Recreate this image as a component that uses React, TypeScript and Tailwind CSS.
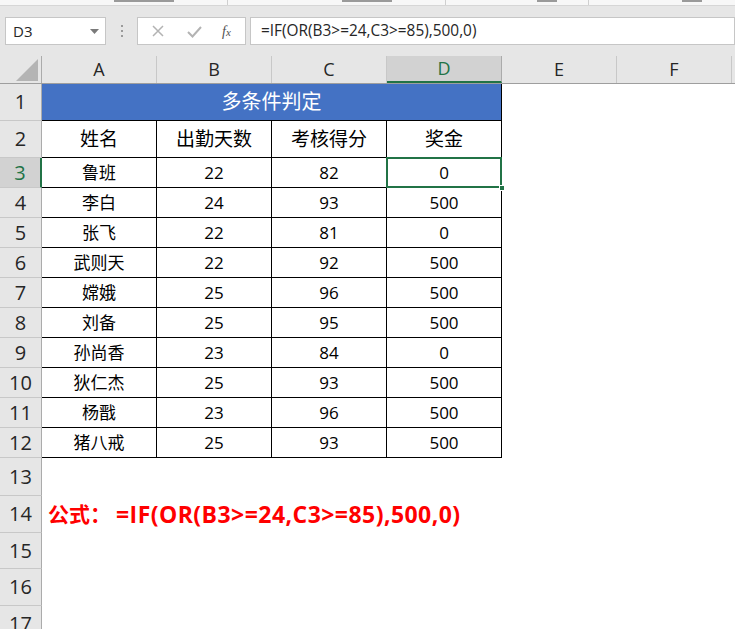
import React from 'react'

const font = "font-['Open_Sans','Noto_Sans_CJK_SC',sans-serif]"

const rows: [string, number, number, number][] = [
  ['鲁班', 22, 82, 0],
  ['李白', 24, 93, 500],
  ['张飞', 22, 81, 0],
  ['武则天', 22, 92, 500],
  ['嫦娥', 25, 96, 500],
  ['刘备', 25, 95, 500],
  ['孙尚香', 23, 84, 0],
  ['狄仁杰', 25, 93, 500],
  ['杨戬', 23, 96, 500],
  ['猪八戒', 25, 93, 500],
]

const cols = ['A', 'B', 'C', 'D', 'E', 'F']

function RowHead({ n, active = false }: { n: number; active?: boolean }) {
  return (
    <div
      className={`w-[42px] shrink-0 flex items-center justify-center text-[20px] border-b border-[#c8c8c8] ${
        active
          ? 'bg-[#d2d2d2] text-[#217346] border-r-2 border-r-[#217346]'
          : 'bg-[#e6e6e6] text-[#262626] border-r border-r-[#ababab]'
      }`}
    >
      {n}
    </div>
  )
}

function Cell({ children, edge = true, className = '' }: { children?: React.ReactNode; edge?: boolean; className?: string }) {
  return (
    <div
      className={`w-[115px] shrink-0 flex items-center justify-center text-[17px] text-black ${
        edge ? 'border-r border-b border-black' : ''
      } ${className}`}
    >
      {children}
    </div>
  )
}

export default function App() {
  return (
    <div className={`w-[735px] h-[629px] overflow-hidden bg-white ${font}`}>
      {/* ribbon remnant */}
      <div className="h-[6px] bg-[#f7f7f7] border-b border-[#d6d6d6] flex">
        <div className="w-[228px] border-r border-[#cfcfcf] flex justify-center">
          <div className="w-[60px] h-[2px] bg-[#9a9a9a] ml-[60px]" />
        </div>
        <div className="w-[218px] border-r border-[#cfcfcf] flex justify-center">
          <div className="w-[50px] h-[2px] bg-[#9a9a9a] ml-[60px]" />
        </div>
        <div className="w-[143px] border-r border-[#cfcfcf] flex justify-center">
          <div className="w-[20px] h-[2px] bg-[#9a9a9a] ml-[60px]" />
        </div>
        <div className="flex-1 flex justify-center">
          <div className="w-[20px] h-[2px] bg-[#9a9a9a] ml-[60px]" />
        </div>
      </div>

      {/* formula bar */}
      <div className="h-[50px] bg-[#e6e6e6] pt-[11px]">
        <div className="flex h-[28px] items-stretch">
          <div className="ml-[5px] w-[101px] bg-white border border-[#c6c6c6] flex items-center justify-between pl-[7px] pr-[6px]">
            <span className="text-[15px] text-[#262626]">D3</span>
            <svg width="9" height="5" viewBox="0 0 9 5">
              <path d="M0 0 L9 0 L4.5 5 Z" fill="#7a7a7a" />
            </svg>
          </div>
          <div className="w-[31px] flex flex-col items-center justify-center gap-[3px]">
            <div className="w-[2px] h-[2px] bg-[#9a9a9a]" />
            <div className="w-[2px] h-[2px] bg-[#9a9a9a]" />
            <div className="w-[2px] h-[2px] bg-[#9a9a9a]" />
          </div>
          <div className="w-[109px] bg-white border border-[#c6c6c6] flex items-center">
            <svg width="14" height="14" viewBox="0 0 14 14" className="ml-[13px]">
              <path d="M2 2 L12 12 M12 2 L2 12" stroke="#b3b3b3" strokeWidth="1.5" />
            </svg>
            <svg width="15" height="13" viewBox="0 0 15 13" className="ml-[22px]">
              <path d="M1 7 L5.5 11.5 L14 2" stroke="#b3b3b3" strokeWidth="2" fill="none" />
            </svg>
            <span className="ml-[20px] text-[14px] italic font-['Liberation_Serif',serif] text-[#505050]">
              f<span className="text-[11px]">x</span>
            </span>
          </div>
          <div className="ml-[4px] flex-1 bg-white border border-[#c6c6c6] flex items-center pl-[10px]">
            <span className="text-[15.4px] text-[#262626]">=IF(OR(B3&gt;=24,C3&gt;=85),500,0)</span>
          </div>
        </div>
      </div>

      {/* column headers */}
      <div className="flex h-[28px] bg-[#e6e6e6] border-b border-[#9e9e9e]">
        <div className="w-[42px] shrink-0 border-r border-[#ababab] flex items-end justify-end pr-[3px] pb-[2px]">
          <svg width="22" height="22" viewBox="0 0 22 22">
            <path d="M22 0 L22 22 L0 22 Z" fill="#b4b4b4" />
          </svg>
        </div>
        {cols.map((c) => (
          <div
            key={c}
            className={`w-[115px] shrink-0 flex items-center justify-center text-[18px] ${
              c === 'D'
                ? 'bg-[#d2d2d2] text-[#217346] border-r border-r-[#ababab] border-b-2 border-b-[#217346]'
                : 'text-[#262626] border-r border-[#c8c8c8]'
            }`}
          >
            {c}
          </div>
        ))}
      </div>

      {/* row 1 */}
      <div className="flex h-[37px]">
        <RowHead n={1} />
        <div className="w-[460px] shrink-0 bg-[#4472c4] text-white text-[20px] flex items-center justify-center border-r border-b border-black">
          多条件判定
        </div>
      </div>

      {/* row 2 */}
      <div className="flex h-[37px]">
        <RowHead n={2} />
        {['姓名', '出勤天数', '考核得分', '奖金'].map((h) => (
          <Cell key={h} className="text-[19px]">
            {h}
          </Cell>
        ))}
      </div>

      {/* data rows */}
      {rows.map(([name, days, score, bonus], i) => (
        <div key={name} className="flex h-[30px]">
          <RowHead n={i + 3} active={i === 0} />
          <Cell>{name}</Cell>
          <Cell>{days}</Cell>
          <Cell>{score}</Cell>
          <Cell className={i === 0 ? 'relative' : ''}>
            {bonus}
            {i === 0 && (
              <>
                <div className="absolute inset-[-1px] border-2 border-[#217346] pointer-events-none" />
                <div className="absolute right-[-4px] bottom-[-4px] w-[6px] h-[6px] bg-[#217346] border border-white" />
              </>
            )}
          </Cell>
        </div>
      ))}

      {/* row 13 */}
      <div className="flex h-[38px]">
        <RowHead n={13} />
      </div>
      {/* row 14 */}
      <div className="flex h-[37px]">
        <RowHead n={14} />
        <div className="flex items-center pl-[6px] whitespace-nowrap font-bold text-[#ff0000]">
          <span className="text-[21px]">公式：</span>
          <span className="ml-[5px] text-[23px] tracking-[0.45px]">=IF(OR(B3&gt;=24,C3&gt;=85),500,0)</span>
        </div>
      </div>
      <div className="flex h-[36px]">
        <RowHead n={15} />
      </div>
      <div className="flex h-[37px]">
        <RowHead n={16} />
      </div>
      <div className="flex h-[37px]">
        <RowHead n={17} />
      </div>
    </div>
  )
}
